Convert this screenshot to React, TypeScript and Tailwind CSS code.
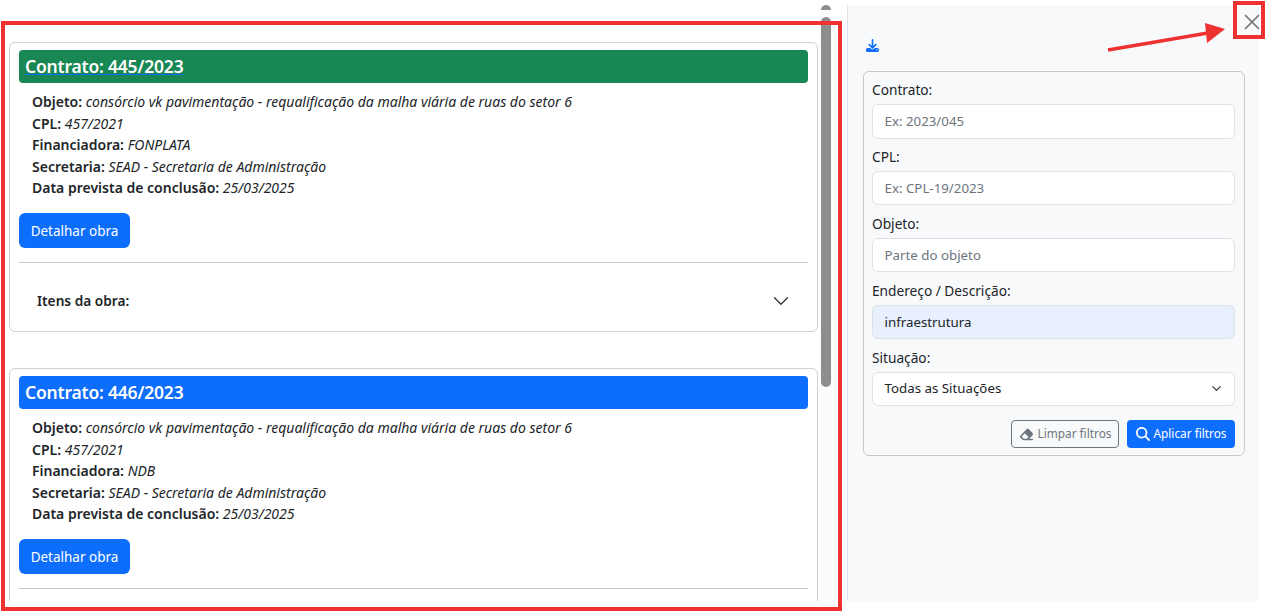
import { FaDownload, FaEraser, FaMagnifyingGlass } from "react-icons/fa6";
import { ChevronDown, X } from "lucide-react";

const contratos = [
  { numero: "445/2023", financiadora: "FONPLATA", cor: "bg-[#198754]", sublinhado: true, itens: true },
  { numero: "446/2023", financiadora: "NDB", cor: "bg-[#0d6efd]", sublinhado: false, itens: false },
];

function ContratoCard({ numero, financiadora, cor, sublinhado, itens }: (typeof contratos)[number]) {
  return (
    <div className="mb-9 shrink-0 rounded-md border border-[#d0d0d0] bg-white px-[9px] pt-[7px] pb-0">
      <div className={`flex h-[33px] items-center rounded-[4px] px-1.5 text-[17.5px] font-semibold tracking-[-0.2px] text-white ${cor}`}>
        <span className={sublinhado ? "underline decoration-[#0d6efd]" : ""}>Contrato: {numero}</span>
      </div>
      <div className="px-[13px] pt-[8px] text-[14px] leading-[21.6px] text-[#212529]">
        <p><b className="font-semibold">Objeto:</b> <i>consórcio vk pavimentação - requalificação da malha viária de ruas do setor 6</i></p>
        <p><b className="font-semibold">CPL:</b> <i>457/2021</i></p>
        <p><b className="font-semibold">Financiadora:</b> <i>{financiadora}</i></p>
        <p><b className="font-semibold">Secretaria:</b> <i>SEAD - Secretaria de Administração</i></p>
        <p><b className="font-semibold">Data prevista de conclusão:</b> <i>25/03/2025</i></p>
      </div>
      <button type="button" className="mt-[14px] block h-[35px] w-[111px] rounded-md bg-[#0d6efd] pt-[1px] text-[13.5px] text-white">
        Detalhar obra
      </button>
      <hr className="mt-[14px] border-[#c8c8c8]" />
      <div className="flex h-[68px] items-center justify-between pt-[8px] pr-[14px] pl-[18px]">
        {itens && (
          <>
            <b className="text-[13.7px] font-semibold text-[#212529]">Itens da obra:</b>
            <ChevronDown size={26} strokeWidth={1.2} className="text-[#333]" />
          </>
        )}
      </div>
    </div>
  );
}

function Campo({ label, placeholder, value, filled }: { label: string; placeholder?: string; value?: string; filled?: boolean }) {
  return (
    <div className="mb-[7.3px]">
      <label className="mb-[4px] block text-[13.7px] leading-[21px] text-[#212529]">{label}</label>
      <input
        readOnly
        placeholder={placeholder}
        value={value}
        className={`block h-[34.6px] w-full rounded-md border border-[#dee2e6] pr-3 pl-[11.5px] text-[13.3px] text-[#212529] outline-none placeholder:text-[#6c757d] ${filled ? "bg-[#e8f0fe]" : "bg-white"}`}
      />
    </div>
  );
}

export default function App() {
  return (
    <div className="relative h-[612px] w-[1269px] overflow-hidden bg-white pt-[5px] [font-family:'Noto_Sans',sans-serif]">
      <div className="flex h-[596px]">
        <div className="flex h-full w-[847px] shrink-0 flex-col overflow-hidden px-[9px] pt-[37px] pr-[29px]">
          <ContratoCard {...contratos[0]} />
          <ContratoCard {...contratos[1]} />
        </div>

        <aside className="h-full w-[412px] shrink-0 border-l border-[#dee2e6] bg-[#f8f9fa] pt-[34px] pr-[14px] pl-[15px]">
          <FaDownload size={13} className="ml-[3px] text-[#0d6efd]" />
          <div className="mt-[19px] rounded-md border border-[#c6c8ca] pt-[7px] pr-[9px] pb-[7px] pl-[8px]">
            <Campo label="Contrato:" placeholder="Ex: 2023/045" />
            <Campo label="CPL:" placeholder="Ex: CPL-19/2023" />
            <Campo label="Objeto:" placeholder="Parte do objeto" />
            <Campo label="Endereço / Descrição:" value="infraestrutura" filled />
            <div>
              <label className="mb-[4px] block text-[13.7px] leading-[21px] text-[#212529]">Situação:</label>
              <div className="flex h-[34.6px] items-center justify-between rounded-md border border-[#dee2e6] bg-white pr-[10px] pl-[11.5px] text-[13.3px] text-[#212529]">
                Todas as Situações
                <ChevronDown size={15} strokeWidth={2} className="text-[#343a40]" />
              </div>
            </div>
            <div className="mt-[14px] flex justify-end gap-2">
              <button type="button" className="flex h-[28px] w-[108px] items-center justify-center gap-[4px] rounded-[4px] border border-[#6c757d] text-[11.8px] text-[#6c757d]">
                <FaEraser size={15} /> Limpar filtros
              </button>
              <button type="button" className="flex h-[28px] w-[108px] items-center justify-center gap-[4px] rounded-[4px] bg-[#0d6efd] text-[11.8px] text-white">
                <FaMagnifyingGlass size={14} /> Aplicar filtros
              </button>
            </div>
          </div>
        </aside>
      </div>

      {/* barra de rolagem do painel esquerdo */}
      <div className="absolute top-[5px] left-[819px] h-[596px] w-[14px] bg-[#fcfcfc]" />
      <div className="absolute top-[5px] left-[821px] h-[5px] w-[10px] rounded-t-full bg-[#8e8e8e]" />
      <div className="absolute top-[17px] left-[821px] h-[370px] w-[10px] rounded-full bg-[#8e8e8e]" />

      <X size={26} strokeWidth={1.6} className="absolute top-[8.5px] left-[1238.5px] text-[#757575]" />

      {/* marcações vermelhas da captura */}
      <div className="pointer-events-none absolute top-[21px] left-[1px] h-[590px] w-[841px] border-4 border-[#ee3232]" />
      <div className="pointer-events-none absolute top-[1px] left-[1233px] h-[38px] w-[32px] border-4 border-[#ee3232]" />
      <svg className="pointer-events-none absolute top-[20px] left-[1105px]" width="125" height="34" viewBox="0 0 125 34">
        <path d="M3 30 L103 13" stroke="#ee3232" strokeWidth="3.5" />
        <path d="M120 9 L100 3 L102 23 Z" fill="#ee3232" />
      </svg>
    </div>
  );
}
